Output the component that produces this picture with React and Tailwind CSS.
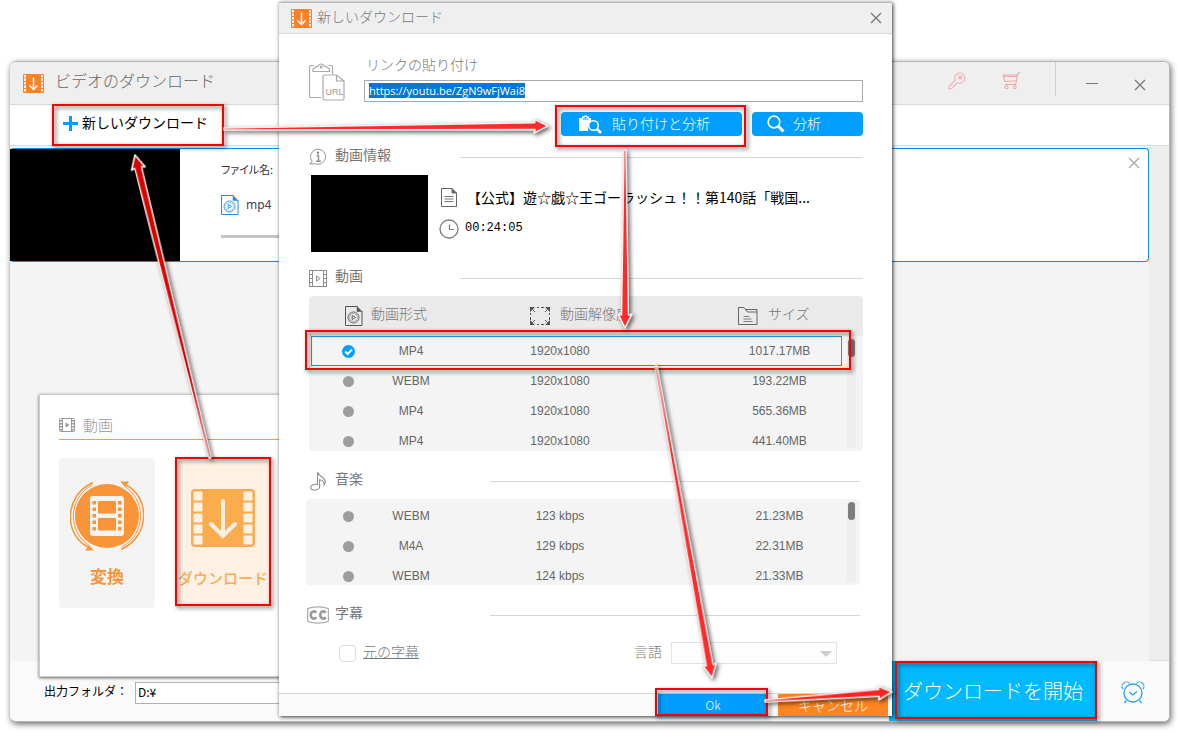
import React, { useEffect, useRef, useState } from 'react';

const videoRows = [
	{ format: 'MP4', detail: '1920x1080', size: '1017.17MB' },
	{ format: 'WEBM', detail: '1920x1080', size: '193.22MB' },
	{ format: 'MP4', detail: '1920x1080', size: '565.36MB' },
	{ format: 'MP4', detail: '1920x1080', size: '441.40MB' },
];

const audioRows = [
	{ format: 'WEBM', detail: '123 kbps', size: '21.23MB' },
	{ format: 'M4A', detail: '129 kbps', size: '22.31MB' },
	{ format: 'WEBM', detail: '124 kbps', size: '21.33MB' },
];

const highlights = [
	{ x: 53, y: 105, w: 170, h: 40 },
	{ x: 556, y: 106, w: 189, h: 40 },
	{ x: 306, y: 331, w: 544, h: 38 },
	{ x: 176, y: 458, w: 94, h: 147 },
	{ x: 656, y: 689, w: 111, h: 26 },
	{ x: 896, y: 662, w: 200, h: 56 },
];

const arrows = [
	{ from: [224, 129], to: [548, 126], color: '#ff2a2a' },
	{ from: [625, 150], to: [625, 328], color: '#ff2a2a' },
	{ from: [656, 366], to: [712, 678], color: '#ff2a2a' },
	{ from: [765, 701], to: [892, 692], color: '#ff2222' },
	{ from: [210, 458], to: [135, 155], color: '#d90000' },
];

const Logo = () => (
	<svg width="21" height="19" viewBox="0 0 21 19" aria-hidden="true">
		<rect width="21" height="19" rx="1" fill="#ff8127" />
		{[1, 4.5, 8, 11.5, 15].map(y => (
			<g key={y} fill="#fff">
				<rect x="1" y={y} width="2" height="2.4" />
				<rect x="18" y={y} width="2" height="2.4" />
			</g>
		))}
		<path d="M10.5 3.5v12M6.5 11.5l4 4 4-4" fill="none" stroke="#fff" strokeWidth="1.5" />
	</svg>
);

const Cross = () => (
	<svg width="12" height="12" viewBox="0 0 12 12" aria-hidden="true">
		<path d="M1 1l10 10M11 1L1 11" stroke="currentColor" strokeWidth="1.3" />
	</svg>
);

const KeyIcon = () => (
	<svg width="18" height="18" viewBox="0 0 18 18" fill="none" stroke="#f2b0b0" strokeWidth="1.1" aria-hidden="true">
		<path d="M7.2 8.4A5.1 5.1 0 1 1 10 10.9L8.3 11.5 7.5 13.3 5.8 13.6 5.3 15.2 3.3 16.6 1 16.8 1.2 14.3z" />
		<circle cx="12.3" cy="5.5" r="1.6" fill="#f6c8c8" />
	</svg>
);

const CartIcon = () => (
	<svg width="19" height="18" viewBox="0 0 19 18" fill="none" stroke="#f2a6a6" strokeWidth="1.1" aria-hidden="true">
		<path d="M18.5 1H16l-2.3 11.5H3M1 3h14.5M1 3l1.8 6.5 11.5-.8M1.4 4.5h13.5" />
		<circle cx="4.5" cy="15.2" r="1.5" />
		<circle cx="12.7" cy="15.2" r="1.5" />
	</svg>
);

const PlayFile = ({ color }) => (
	<svg width="18" height="20" viewBox="0 0 18 20" fill="none" stroke={color} aria-hidden="true">
		<path d="M12.5.5H.5v19H17V5" />
		<path d="M12 .5l5 5h-5z" fill={color} strokeWidth=".5" />
		<circle cx="8.5" cy="11.5" r="5.5" strokeWidth=".9" />
		<circle cx="8.5" cy="11.5" r="4" strokeWidth=".4" />
		<path d="M7.2 9.5v4l3.3-2z" strokeWidth=".9" />
	</svg>
);

const FilmIcon = ({ color }) => (
	<svg width="18" height="17" viewBox="0 0 18 17" fill="none" stroke={color} aria-hidden="true">
		<rect x=".5" y=".5" width="17" height="16" />
		<path d="M3.5.5v16M14.5.5v16M.5 4.5H4M.5 8.5H4M.5 12.5H4M14 4.5h3.5M14 8.5h3.5M14 12.5h3.5" />
		<path d="M7.5 6v5l3.7-2.5z" />
	</svg>
);

const SmallFilm = () => (
	<svg width="16" height="14" viewBox="0 0 16 14" fill="none" stroke="#9a9a9a" aria-hidden="true">
		<rect x=".5" y=".5" width="15" height="13" rx="1" />
		<path d="M3.5.5v13M12.5.5v13" />
		<path d="M2 2v11M14 2v11" strokeWidth="2" strokeDasharray="1.5 1.5" />
		<path d="M6.5 4.5v5l4-2.5z" fill="#9a9a9a" strokeWidth="0" />
	</svg>
);

const UrlIcon = () => (
	<svg width="36" height="39" viewBox="0 0 36 39" fill="none" stroke="#a9a9a9" strokeWidth="1.2" aria-hidden="true">
		<path d="M12 35.5H2A1.5 1.5 0 0 1 .5 34V5A1.5 1.5 0 0 1 2 3.5h3M19.5 3.5H22A1.5 1.5 0 0 1 23.5 5v7" />
		<path d="M4 9.5V7l3.5-2.5h1.2a3.7 3.7 0 0 1 7 0h1.3L20.500 7v2.500z" />
		<circle cx="12.2" cy="5" r="1" />
		<path d="M27.5 13h-12a1.5 1.5 0 0 0-1.5 1.500v22a1.500 1.500 0 0 0 1.500 1.500h18a1.500 1.500 0 0 0 1.500-1.500V19zV19H35" />
		<text x="16.500" y="32.500" fontSize="9" fontFamily="Liberation Sans, sans-serif" fill="#999" stroke="none">URL</text>
	</svg>
);

const InfoIcon = () => (
	<svg width="19" height="18" viewBox="0 0 19 18" fill="none" stroke="#8d8d8d" aria-hidden="true">
		<path d="M3.5 13.8a7.900 7.900 0 1 1 3.500 2.400H.8z" />
		<path d="M8 7.500h2v5.500M7.500 13.500h5" strokeWidth="1.5" />
		<circle cx="9.5" cy="4.5" r="1.2" fill="#777" stroke="none" />
	</svg>
);

const TextFile = () => (
	<svg width="16" height="19" viewBox="0 0 16 19" fill="none" stroke="#666" aria-hidden="true">
		<path d="M11 .5H.5v18h15V5" />
		<path d="M11 .5L15.5 5H11z" fill="#666" />
		<path d="M3.500 8.500h9M3.500 11h9M3.500 13.500h9" strokeWidth=".9" />
	</svg>
);

const ClockIcon = () => (
	<svg width="20" height="20" viewBox="0 0 20 20" fill="none" stroke="#7c7c7c" aria-hidden="true">
		<circle cx="10" cy="10" r="9" strokeWidth="1.3" />
		<path d="M10.5 5.5v5H15" strokeWidth="1.2" />
	</svg>
);

const ExpandIcon = () => (
	<svg width="20" height="18" viewBox="0 0 20 18" fill="none" stroke="#555" aria-hidden="true">
		<path d="M.5 6v2M.5 10v3M19.5 6v2M19.5 10v3M7 .5h2M11 .5h3M7 17.5h2M11 17.5h3" />
		<path d="M0 0h5L0 5zM20 0v5l-5-5zM0 18v-5l5 5zM20 18h-5l5-5z" fill="#555" stroke="none" />
		<path d="M1 1l4 4M19 1l-4 4M1 17l4-4M19 17l-4-4" />
	</svg>
);

const FolderIcon = () => (
	<svg width="20" height="18" viewBox="0 0 20 18" fill="none" stroke="#666" aria-hidden="true">
		<path d="M.5 17.5V.5H6L9.5 5H19v12.5zM7.5 2.5H19V5" />
		<path d="M5.5 9.5h6M5.5 12h8M5.5 14.5h9" strokeWidth=".8" />
	</svg>
);

const MusicIcon = () => (
	<svg width="17" height="20" viewBox="0 0 17 20" fill="none" stroke="#8f8f8f" strokeWidth="1.1" aria-hidden="true">
		<path d="M7.5 13.5V1.2c1.500 4.300 7.800 5.300 7.800 9.500 0 1.500-.6 2.500-1.200 3.300.2-3.200-2.500-5-4.500-5.300v7c0 1.700-2 3.300-4.600 3.300S.7 17.800.7 16.400c0-2 2.500-3.700 6.800-2.900z" />
	</svg>
);

const CcIcon = () => (
	<svg width="22" height="18" viewBox="0 0 22 18" fill="none" stroke="#999" className="shrink-0" aria-hidden="true">
		<path d="M.7 2.5Q11-.8 21.3 2.5v13Q11 18.8.7 15.5z" />
		<path d="M9.3 6.7C7.8 4.5 3.8 5 3.8 9s4 4.500 5.500 2.300M18.800 6.700C17.300 4.500 13.300 5 13.300 9s4 4.500 5.500 2.300" strokeWidth="2.5" />
	</svg>
);

const SearchIcon = () => (
	<svg width="18" height="18" viewBox="0 0 18 18" fill="none" stroke="#fff" aria-hidden="true">
		<circle cx="7" cy="7" r="5.8" strokeWidth="1.7" />
		<path d="M11.5 11.5l5 5" strokeWidth="3" />
	</svg>
);

const PasteSearch = () => (
	<svg width="23" height="19" viewBox="0 0 23 19" fill="none" aria-hidden="true">
		<path d="M0 3h3V1.500h1.500L5 .5h3l.5 1H10V3h2v4L9 9v7H0z" fill="#fff" />
		<path d="M3.5 4h6M5.5 2.5h2" stroke="#009fff" />
		<circle cx="14.5" cy="10.5" r="4.8" stroke="#fff" strokeWidth="1.5" fill="#009fff" />
		<path d="M18 14l4 4" stroke="#fff" strokeWidth="2.6" />
	</svg>
);

const ConvertIcon = () => (
	<svg width="74" height="70" viewBox="0 0 74 70" fill="none" aria-hidden="true">
		<circle cx="37" cy="35" r="32" fill="#f99439" />
		<g stroke="#f99439" strokeWidth="1.5">
			<path d="M23 1.5C-7 15-6 55 19 66.5M51 68.5C81 55 80 15 55 3.5" />
			<path d="M22 4C-3 18-2 52 20 65M52 66C77 52 76 18 54 5" strokeWidth="1" />
		</g>
		<path d="M50 .5h9l-4 5zM24 69.5h-9l4-5z" fill="#f99439" />
		<rect x="20" y="15" width="34" height="40" rx="3" fill="#f4f4f4" />
		<g fill="#f99439">
			<rect x="28" y="20" width="18" height="12.5" rx="1" />
			<rect x="28" y="37" width="18" height="12.5" rx="1" />
			{[20, 26.5, 33, 39.5, 46].map(y => (
				<g key={y}>
					<rect x="22.5" y={y} width="3.5" height="3.5" />
					<rect x="48" y={y} width="3.5" height="3.5" />
				</g>
			))}
		</g>
	</svg>
);

const DownloadIcon = () => (
	<svg width="64" height="58" viewBox="0 0 64 58" fill="none" aria-hidden="true">
		<rect width="64" height="58" rx="4" fill="#faac4f" />
		{[2.5, 13.5, 24.5, 35.5, 46.5].map(y => (
			<g key={y} fill="#fff0e4">
				<rect x="2.5" y={y} width="9" height="9" rx="1" />
				<rect x="52.5" y={y} width="9" height="9" rx="1" />
			</g>
		))}
		<path d="M32 12v34M20 35l12 12 12-12" stroke="#fff0e4" strokeWidth="4" strokeLinecap="round" />
	</svg>
);

const AlarmIcon = () => (
	<svg width="24" height="23" viewBox="0 0 24 23" fill="none" stroke="#2a9df0" strokeWidth="1.3" aria-hidden="true">
		<circle cx="12" cy="12" r="9" />
		<path d="M8.5 11l3 3L16 10.5M5.5 19.5L3.5 22M18.5 19.5l2 2.500" />
		<path d="M2.2 8.2A4.2 4.2 0 1 1 8.6 2.4M21.8 8.2A4.2 4.2 0 1 0 15.4 2.4" strokeWidth="1.1" />
	</svg>
);

const Section = ({ icon, title, wide }) => (
	<div className="flex h-5 items-center">
		<h2 className={wide ? 'flex w-[151px] items-center gap-2' : 'flex w-[181px] items-center gap-2'}>
			<span className="flex w-[18px] justify-center">{icon}</span>
			<span className="pb-1.5 text-sm leading-4">{title}</span>
		</h2>
		<div className="h-px flex-1 bg-[#d6d6d6]" />
	</div>
);

const Rows = ({ rows, name, selected, onSelect }) => (
	<tbody>
		{rows.map((row, i) => (
			<tr key={i} className={selected === i ? 'h-[30px] outline outline-1 -outline-offset-1 outline-[#1e96e8]' : 'h-[30px]'}>
				<td>
					<label className="relative flex items-center justify-center">
						<input
							type="radio"
							name={name}
							aria-label={row.format + ' ' + row.size}
							checked={selected === i}
							onChange={() => onSelect(i)}
							className="size-[11px] appearance-none rounded-full bg-[#9d9d9d] checked:size-[13px] checked:bg-[#009fff]"
						/>
						{selected === i &&
							<svg width="13" height="13" viewBox="0 0 13 13" className="pointer-events-none absolute" aria-hidden="true">
								<path d="M3.2 6.5L5.7 9 10 4.5" fill="none" stroke="#fff" strokeWidth="2" />
							</svg>
						}
					</label>
				</td>
				<td>{row.format}</td>
				<td>{row.detail}</td>
				<td className="pl-[34px]">{row.size}</td>
			</tr>
		))}
	</tbody>
);

const Columns = () => (
	<colgroup>
		<col className="w-[74px]" />
		<col className="w-[52px]" />
		<col className="w-[246px]" />
		<col />
	</colgroup>
);

const ScrollBar = () => (
	<div className="my-[3px] w-[9px] bg-[#eeeeee] px-px">
		<div className="h-[18px] rounded bg-[#7d7d7d]" />
	</div>
);

// Tapered shaft that widens towards the head
const Arrow = ({ from, to, color }) => {
	const dx = to[0] - from[0];
	const dy = to[1] - from[1];
	const len = Math.hypot(dx, dy);
	const angle = Math.atan2(dy, dx) * 180 / Math.PI;
	const neck = len - 13;
	return (
		<path
			d={`M0 -1L${neck} -3.5L${neck - 1} -7L${len} 0L${neck - 1} 7L${neck} 3.5L0 1z`}
			transform={`translate(${from[0]} ${from[1]}) rotate(${angle})`}
			fill={color}
			stroke="#f3eded"
			strokeWidth="1.6"
			strokeLinejoin="round"
		/>
	);
};

const Guides = () => (
	<svg width="1180" height="732" viewBox="0 0 1180 732" className="pointer-events-none absolute top-0 left-0" aria-hidden="true">
		<defs>
			<filter id="lift" filterUnits="userSpaceOnUse" x="0" y="0" width="1180" height="732" colorInterpolationFilters="sRGB">
				<feDropShadow dx="2" dy="2" stdDeviation="2" floodColor="#000" floodOpacity=".6" />
			</filter>
		</defs>
		<g filter="url(#lift)" fill="none" stroke="#f80000" strokeWidth="2">
			{highlights.map((b, i) => <rect key={i} x={b.x} y={b.y} width={b.w} height={b.h} />)}
		</g>
		<g filter="url(#lift)">
			{arrows.map((a, i) => <Arrow key={i} {...a} />)}
		</g>
	</svg>
);

const MainWindow = () => (
	<div className="flex flex-1 flex-col overflow-hidden rounded-md border border-l-0 border-[#b5b5b5] bg-[#f4f4f4] shadow-[1px_2px_6px_rgba(0,0,0,0.6)]">
		<header className="flex h-[43px] items-center border-b border-[#d9d9d9] bg-[#efefef] pl-[13px]">
			<Logo />
			<h1 className="ml-[11px] flex-1 pb-1.5 text-base font-light text-[#666]">ビデオのダウンロード</h1>
			<button aria-label="登録" className="mr-9 pb-1"><KeyIcon /></button>
			<button aria-label="カート" className="mr-[34px] pb-1"><CartIcon /></button>
			<div className="mr-[30px] h-[34px] w-px self-start bg-[#cfcfcf]" />
			<button aria-label="最小化" className="mr-9 h-3 w-3">
				<span className="block h-px bg-[#777]" />
			</button>
			<button aria-label="閉じる" className="mr-[23px] pt-1 text-[#777]"><Cross /></button>
		</header>
		<div className="flex h-[41px] items-center border-b border-[#dcdcdc] bg-white pl-[53px]">
			<button className="flex items-center gap-1 pb-1 text-sm text-black">
				<svg width="15" height="15" viewBox="0 0 15 15" aria-hidden="true">
					<path d="M7.5 0v15M0 7.5h15" stroke="#009fff" strokeWidth="3" />
				</svg>
				<span className="pb-0.5">新しいダウンロード</span>
			</button>
		</div>
		<main className="flex flex-1">
			<div className="flex-1 pt-0.5">
				<div className="flex h-[114px] rounded border border-l-0 border-[#0a8cf0] bg-white">
					<div className="w-[170px] bg-black" />
					<div className="flex-1 pt-2.5 pl-[41px] text-xs text-[#333]">
						<p className="text-[11px] leading-5 [font-feature-settings:'palt']">ファイル名:</p>
						<p className="mt-4 flex items-center gap-[7px] font-['Noto_Sans'] text-[#40405a]">
							<PlayFile color="#1a8cf0" />
							mp4
						</p>
						<div className="mt-5 h-[3px] w-1/2 bg-[#c6c6c6]" />
					</div>
					<button aria-label="削除" className="mt-2 mr-2 self-start text-[#aaa]"><Cross /></button>
				</div>
			</div>
			<div className="w-5 border-b border-[#ddd] bg-[#eeeeee]" />
		</main>
		<footer className="flex h-[60px] items-center bg-[#fafafa] pl-[34px]">
			<label htmlFor="folder" className="mr-[7px] text-xs text-black">出力フォルダ：</label>
			<input id="folder" defaultValue="D:¥" className="mt-1 h-[22px] min-w-0 flex-1 border border-[#b0b0b0] bg-white pb-1 pl-0.5 text-xs text-black" />
			<button className="ml-8 h-full w-[208px] bg-[#00b9ff] text-xl font-light text-white">ダウンロードを開始</button>
			<button aria-label="スケジュール" className="mx-6 pt-0.5"><AlarmIcon /></button>
		</footer>
	</div>
);

const ToolPanel = () => (
	<div className="absolute top-[394px] left-[39px] h-[283px] w-[320px] border border-[#ccc] bg-white pt-[22px] pl-[19px] shadow-[0_1px_3px_rgba(0,0,0,0.6)]">
		<h2 className="flex h-[23px] items-center gap-2 border-b border-[#f59a4a] pb-1.5 text-[15px] font-light text-[#999]">
			<SmallFilm />
			<span>動画</span>
		</h2>
		<div className="mt-[18px] flex gap-5">
			<button className="flex h-[150px] w-24 flex-col items-center rounded bg-[#f4f4f4] pt-[23px] text-[17px] font-bold text-[#f99439]">
				<ConvertIcon />
				<span className="mt-3">変換</span>
			</button>
			<button className="flex h-[150px] w-24 flex-col items-center rounded bg-[#fff0e4] pt-[31px] text-[15px] font-medium text-[#faac4f]">
				<DownloadIcon />
				<span className="mt-5">ダウンロード</span>
			</button>
		</div>
	</div>
);

const Dialog = () => {
	const urlRef = useRef(null);
	const [video, setVideo] = useState(0);
	const [audio, setAudio] = useState(-1);

	useEffect(() => {
		urlRef.current.focus();
		urlRef.current.select();
	}, []);

	return (
		<div role="dialog" aria-label="新しいダウンロード" className="absolute top-[2px] left-[279px] w-[613px] border-t border-[#bbb] bg-white text-[#777] shadow-[1px_1px_4px_rgba(0,0,0,0.8)]">
			<div className="flex h-[31px] items-center border-b border-[#d9d9d9] bg-[#efefef] pr-[10px] pl-3">
				<Logo />
				<span className="ml-[5px] flex-1 pb-1 text-sm font-light">新しいダウンロード</span>
				<button aria-label="閉じる"><Cross /></button>
			</div>
			<div className="pr-[29px] pl-[30px]">
				<div className="flex gap-[19px] pt-[22px]">
					<div className="pt-1.5"><UrlIcon /></div>
					<div className="flex-1">
						<label htmlFor="url" className="block h-6 pl-0.5 text-sm leading-4 font-light">リンクの貼り付け</label>
						<input
							id="url"
							ref={urlRef}
							defaultValue="https://youtu.be/ZgN9wFjWai8"
							className="block h-[22px] w-full border border-[#aaa] pb-0.5 pl-1 font-['Open_Sans'] text-[11px] leading-[14px] outline-none selection:bg-[#0078d7] selection:text-white"
						/>
						<div className="mt-2.5 flex justify-end gap-2.5 text-sm text-white">
							<button className="flex h-6 w-[181px] items-center gap-2.5 rounded-sm bg-[#009fff] pl-[18px] font-light">
								<PasteSearch />
								<span className="pb-0.5">貼り付けと分析</span>
							</button>
							<button className="flex h-6 w-[111px] items-center gap-2 rounded-sm bg-[#009fff] pl-[15px] font-light">
								<SearchIcon />
								<span className="pb-0.5">分析</span>
							</button>
						</div>
					</div>
				</div>
				<div className="pt-[11px]">
					<Section icon={<InfoIcon />} title="動画情報" wide />
				</div>
				<div className="mt-2 flex pl-0.5">
					<div className="h-[77px] w-[117px] bg-black" />
					<div className="pt-3 pl-[11px] text-sm text-black">
						<p className="flex items-center gap-2.5">
							<span className="pl-0.5"><TextFile /></span>
							<span>【公式】遊☆戯☆王ゴーラッシュ！！第140話「戦国...</span>
						</p>
						<p className="mt-3 flex items-center gap-1.5">
							<ClockIcon />
							<span className="pb-0.5 font-['Liberation_Mono'] text-xs">00:24:05</span>
						</p>
					</div>
				</div>
				<div className="mt-4">
					<Section icon={<FilmIcon color="#8d8d8d" />} title="動画" wide />
				</div>

				<div className="mt-2 flex h-[155px] overflow-hidden rounded-sm bg-[#f4f4f4]">
					<div className="flex-1">
						<div className="bg-[#eaeaea]">
							<table className="w-full table-fixed text-center text-sm">
								<colgroup>
									<col className="w-[76px]" />
									<col className="w-[52px]" />
									<col className="w-[246px]" />
									<col />
								</colgroup>
								<thead>
									<tr className="h-10">
										<th colSpan="2" className="pl-9 font-light">
											<span className="flex items-center gap-2">
												<PlayFile color="#555" />
												<span className="pb-1.5">動画形式</span>
											</span>
										</th>
										<th className="pl-[93px] font-light">
											<span className="flex items-center gap-2.5 whitespace-nowrap">
												<ExpandIcon />
												<span className="pb-1.5">動画解像度</span>
											</span>
										</th>
										<th className="pl-[55px] font-light">
											<span className="flex items-center gap-2.5">
												<FolderIcon />
												<span className="pb-1.5">サイズ</span>
											</span>
										</th>
									</tr>
								</thead>
							</table>
						</div>
						<div className="flex h-[115px] gap-[5px] pr-[7px] pl-0.5">
							<div className="flex-1">
								<table className="w-full table-fixed text-center font-['Liberation_Sans'] text-xs text-[#666]">
									<Columns />
									<Rows rows={videoRows} name="video" selected={video} onSelect={setVideo} />
								</table>
							</div>
							<ScrollBar />
						</div>
					</div>
				</div>

				<div className="mt-5 pr-[3px]">
					<Section icon={<MusicIcon />} title="音楽" />
				</div>
				<div className="mt-2 mr-[3px] -ml-[3px] flex h-[86px] gap-[5px] overflow-hidden rounded-sm bg-[#f4f4f4] pr-1 pl-[5px]">
					<div className="flex-1 pt-0.5">
						<table className="w-full table-fixed text-center font-['Liberation_Sans'] text-xs text-[#666]">
							<Columns />
							<Rows rows={audioRows} name="audio" selected={audio} onSelect={setAudio} />
						</table>
					</div>
					<ScrollBar />
				</div>
				<div className="mt-5 pr-[3px]">
					<Section icon={<CcIcon />} title="字幕" />
				</div>
				<div className="mt-[17px] flex h-[22px] items-center pl-[30px] text-sm font-light">
					<input id="subtitle" type="checkbox" className="size-[17px] appearance-none rounded-sm border border-[#ddd]" />
					<label htmlFor="subtitle" className="ml-[7px] pb-1 underline">元の字幕</label>
					<label htmlFor="language" className="mr-[9px] ml-auto pb-1">言語</label>
					<div className="relative mr-[26px]">
						<select id="language" disabled className="block h-[22px] w-[166px] appearance-none border border-[#e2e2e2] bg-[#fdfdfd]" />
						<svg width="12" height="6" viewBox="0 0 12 6" className="pointer-events-none absolute top-[9px] right-[5px]" aria-hidden="true">
							<path d="M0 0h12L6 6z" fill="#ccc" />
						</svg>
					</div>
				</div>
			</div>
			<div className="mt-[29px] flex h-[23px] justify-end gap-[10px] border-t border-[#d6d6d6] bg-[#fafafa] pr-1 text-sm font-light text-white">
				<button className="w-[110px] bg-[#009fff] text-xs">Ok</button>
				<button className="w-[110px] bg-[#ff8522]">キャンセル</button>
			</div>
		</div>
	);
};

export default function App() {
	return (
		<div className="relative flex min-h-screen flex-col bg-white px-2.5 pt-[61px] pb-[10px] font-['Noto_Sans_CJK_JP',sans-serif]">
			<MainWindow />
			<ToolPanel />
			<Dialog />
			<Guides />
		</div>
	);
}
